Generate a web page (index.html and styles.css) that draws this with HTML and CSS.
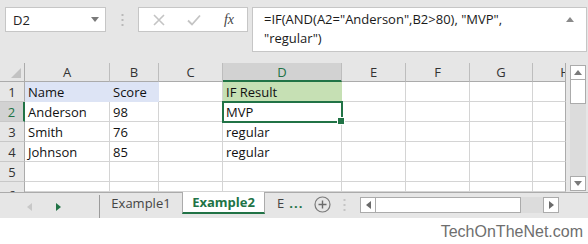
FILE: index.html
```html
<!DOCTYPE html>
<html lang="en">
<head>
    <meta charset="UTF-8">
    <title>Example2 - IF with AND</title>
    <link rel="stylesheet" href="styles.css">
</head>
<body>
    <div class="fbar">
        <div class="namebox">
            <span>D2</span>
            <svg class="caret" width="8" height="5" viewBox="0 0 8 5"><path d="M0 0h8L4 5z" fill="#7a7a7a"/></svg>
        </div>
        <svg class="grip" width="3" height="12" viewBox="0 0 3 12"><g fill="#b9b9b9"><rect x="0.5" y="0" width="2" height="2"/><rect x="0.5" y="5" width="2" height="2"/><rect x="0.5" y="10" width="2" height="2"/></g></svg>
        <div class="fbtns">
            <svg width="12" height="12" viewBox="0 0 12 12"><path d="M1 1l10 10M11 1L1 11" stroke="#c4c4c4" stroke-width="1.6"/></svg>
            <svg width="14" height="12" viewBox="0 0 14 12"><path d="M1 6.5l4 4L13 1.5" stroke="#c4c4c4" stroke-width="1.8" fill="none"/></svg>
            <span class="fx">fx</span>
        </div>
        <div class="formula">
            <span>=IF(AND(A2="Anderson",B2&gt;80), "MVP", "regular")</span>
            <svg class="up" width="8" height="5" viewBox="0 0 8 5"><path d="M0 5h8L4 0z" fill="#8a8a8a"/></svg>
        </div>
    </div>

    <div class="sheet">
        <div class="grid">
            <div class="hd corner"><svg width="10" height="10" viewBox="0 0 10 10"><path d="M10 0v10H0z" fill="#c2c2c2"/></svg></div>
            <div class="hd">A</div>
            <div class="hd">B</div>
            <div class="hd">C</div>
            <div class="hd hd-sel">D</div>
            <div class="hd">E</div>
            <div class="hd">F</div>
            <div class="hd">G</div>
            <div class="hd hd-cut"><span>H</span></div>

            <div class="rh">1</div>
            <div class="c fill-blue">Name</div>
            <div class="c fill-blue">Score</div>
            <div class="c"></div>
            <div class="c fill-green">IF Result</div>
            <div class="c"></div><div class="c"></div><div class="c"></div><div class="c"></div>

            <div class="rh rh-sel">2</div>
            <div class="c">Anderson</div>
            <div class="c">98</div>
            <div class="c"></div>
            <div class="c sel">MVP</div>
            <div class="c"></div><div class="c"></div><div class="c"></div><div class="c"></div>

            <div class="rh">3</div>
            <div class="c">Smith</div>
            <div class="c">76</div>
            <div class="c"></div>
            <div class="c">regular</div>
            <div class="c"></div><div class="c"></div><div class="c"></div><div class="c"></div>

            <div class="rh">4</div>
            <div class="c">Johnson</div>
            <div class="c">85</div>
            <div class="c"></div>
            <div class="c">regular</div>
            <div class="c"></div><div class="c"></div><div class="c"></div><div class="c"></div>

            <div class="rh">5</div>
            <div class="c"></div><div class="c"></div><div class="c"></div><div class="c"></div>
            <div class="c"></div><div class="c"></div><div class="c"></div><div class="c"></div>

            <div class="rh rh-cut">6</div>
            <div class="c"></div><div class="c"></div><div class="c"></div><div class="c"></div>
            <div class="c"></div><div class="c"></div><div class="c"></div><div class="c"></div>
        </div>

        <div class="vscroll">
            <div class="sbtn"><svg width="8" height="5" viewBox="0 0 8 5"><path d="M0 5h8L4 0z" fill="#7a7a7a"/></svg></div>
            <div class="vthumb"></div>
            <div class="vtrack"></div>
            <div class="sbtn"><svg width="8" height="5" viewBox="0 0 8 5"><path d="M0 0h8L4 5z" fill="#7a7a7a"/></svg></div>
        </div>
    </div>

    <div class="tabs">
        <div class="tabnav">
            <svg width="5" height="8" viewBox="0 0 5 8"><path d="M5 0v8L0 4z" fill="#c8c8c8"/></svg>
            <svg width="5" height="8" viewBox="0 0 5 8"><path d="M0 0v8L5 4z" fill="#217346"/></svg>
        </div>
        <div class="tab">Example1</div>
        <div class="tab tab-on">Example2</div>
        <div class="tab tab-more">E <b>...</b></div>
        <svg class="plus" width="17" height="17" viewBox="0 0 17 17"><circle cx="8.5" cy="8.5" r="7.5" fill="none" stroke="#7a7a7a" stroke-width="1.2"/><path d="M8.5 4.5v8M4.5 8.5h8" stroke="#6a6a6a" stroke-width="1.4"/></svg>
        <svg class="grip2" width="3" height="12" viewBox="0 0 3 12"><g fill="#c4c4c4"><rect x="0.5" y="0" width="2" height="2"/><rect x="0.5" y="5" width="2" height="2"/><rect x="0.5" y="10" width="2" height="2"/></g></svg>
        <div class="hscroll">
            <div class="sbtn-h"><svg width="5" height="8" viewBox="0 0 5 8"><path d="M5 0v8L0 4z" fill="#6a6a6a"/></svg></div>
            <div class="hthumb"></div>
            <div class="htrack"></div>
            <div class="sbtn-h"><svg width="5" height="8" viewBox="0 0 5 8"><path d="M0 0v8L5 4z" fill="#6a6a6a"/></svg></div>
        </div>
    </div>

    <div class="credit">TechOnTheNet.com</div>
</body>
</html>
```

FILE: styles.css
```css
* {
    box-sizing: border-box;
}
body {
    margin: 0;
    width: 588px;
    height: 244px;
    overflow: hidden;
    background: #fff;
    font-family: "Open Sans", "Noto Sans", sans-serif;
    font-size: 13px;
    color: #222;
}

/* formula bar */
.fbar {
    display: flex;
    align-items: flex-start;
    height: 58px;
    padding: 7px 1px 0 5px;
    background: #e6e6e6;
}
.namebox {
    display: flex;
    align-items: center;
    justify-content: space-between;
    width: 101px;
    height: 25px;
    padding: 0 6px 0 7px;
    background: #fff;
    border: 1px solid #c6c6c6;
    font-size: 13px;
}
.grip {
    margin: 7px 0 0 15px;
}
.fbtns {
    display: flex;
    align-items: center;
    justify-content: space-between;
    width: 110px;
    height: 25px;
    margin-left: 14px;
    padding: 0 13px 0 14px;
    background: #fff;
    border: 1px solid #c6c6c6;
}
.fx {
    font-family: "Liberation Serif", serif;
    font-style: italic;
    font-size: 14px;
    color: #444;
}
.formula {
    display: flex;
    align-items: flex-start;
    justify-content: space-between;
    flex: 1;
    height: 45px;
    margin-left: 4px;
    padding: 2px 12px 0 11px;
    background: #fff;
    border: 1px solid #c6c6c6;
    font-size: 13px;
    line-height: 19px;
    color: #1a1a1a;
}
.formula span {
    width: 280px;
}
.formula .up {
    margin-top: 7px;
}

/* sheet */
.sheet {
    display: flex;
    height: 134px;
    padding-top: 5px;
    background: #e6e6e6;
}
.grid {
    display: grid;
    grid-template-columns: 25px 85px 49px 64px 119px 64px 64px 63px 33px;
    grid-template-rows: 19px repeat(5, 20px) 10px;
    width: 566px;
    background: #fff;
    overflow: hidden;
}
.hd {
    display: flex;
    align-items: center;
    justify-content: center;
    background: #e6e6e6;
    border-right: 1px solid #bdbdbd;
    border-bottom: 1px solid #ababab;
    color: #333;
    font-size: 13px;
}
.corner {
    justify-content: flex-end;
    align-items: flex-end;
    padding: 0 3px 3px 0;
    border-right-color: #ababab;
}
.hd-sel {
    background: #d2d2d2;
    border-bottom: 2px solid #217346;
    color: #217346;
}
.hd-cut {
    justify-content: flex-start;
    overflow: hidden;
    border-right: 1px solid #ababab;
}
.hd-cut span {
    flex: none;
    width: 64px;
    text-align: center;
}
.rh {
    display: flex;
    align-items: center;
    justify-content: center;
    overflow: hidden;
    background: #e6e6e6;
    border-right: 1px solid #ababab;
    border-bottom: 1px solid #c8c8c8;
    color: #333;
    font-size: 13px;
}
.rh-sel {
    background: #d2d2d2;
    border-right: 2px solid #217346;
    color: #217346;
}
.rh-cut {
    align-items: flex-start;
    padding-top: 7px;
    line-height: 13px;
    border-bottom: none;
}
.c {
    display: flex;
    align-items: center;
    padding: 0 3px;
    border-right: 1px solid #d4d4d4;
    border-bottom: 1px solid #d4d4d4;
    white-space: nowrap;
    color: #111;
    font-size: 13px;
}
.c:nth-child(9n) {
    border-right-color: #ababab;
}
.fill-blue {
    background: #dde4f5;
    border-color: #dde4f5;
}
.fill-green {
    background: #c6e0b4;
    border-color: #c6e0b4;
}
.sel {
    position: relative;
    z-index: 1;
    outline: 2px solid #217346;
    outline-offset: -1px;
}
.sel::after {
    content: "";
    position: absolute;
    right: -4px;
    bottom: -4px;
    width: 6px;
    height: 6px;
    background: #217346;
    border: 1px solid #fff;
}

/* vertical scrollbar */
.vscroll {
    display: flex;
    flex-direction: column;
    width: 16px;
    height: 126px;
    margin: 2px 0 0 4px;
    background: #dcdcdc;
}
.sbtn {
    display: flex;
    align-items: center;
    justify-content: center;
    height: 15px;
    background: #fff;
    border: 1px solid #ababab;
}
.vthumb {
    height: 24px;
    background: #fff;
    border: 1px solid #ababab;
    border-top: none;
}
.vtrack {
    flex: 1;
}

/* sheet tabs */
.tabs {
    display: flex;
    align-items: flex-start;
    height: 26px;
    background: #e6e6e6;
    border-top: 1px solid #ababab;
}
.tabnav {
    display: flex;
    align-items: center;
    gap: 24px;
    width: 100px;
    height: 23px;
    padding-left: 27px;
    border-right: 1px solid #9b9b9b;
    margin-top: 2px;
}
.tab {
    display: flex;
    align-items: center;
    justify-content: center;
    width: 82px;
    height: 22px;
    margin-top: -1px;
    color: #444;
    font-size: 13px;
}
.tab-on {
    width: 83px;
    background: #fff;
    border-left: 1px solid #ababab;
    border-right: 1px solid #ababab;
    border-bottom: 2px solid #217346;
    color: #217346;
    font-weight: bold;
}
.tab-more {
    justify-content: flex-start;
    width: 44px;
    padding-left: 12px;
    white-space: nowrap;
}
.tab-more b {
    margin-left: 5px;
    color: #217346;
    letter-spacing: 1px;
}
.plus {
    margin: 3px 0 0 5px;
}
.grip2 {
    margin: 6px 0 0 12px;
}
.hscroll {
    display: flex;
    width: 199px;
    height: 16px;
    margin: 4px 0 0 14px;
    background: #dcdcdc;
}
.sbtn-h {
    display: flex;
    align-items: center;
    justify-content: center;
    width: 16px;
    background: #fff;
    border: 1px solid #ababab;
}
.hthumb {
    width: 145px;
    background: #fff;
    border: 1px solid #ababab;
    border-left: none;
}
.htrack {
    flex: 1;
}

.credit {
    padding: 5px 5px 0 0;
    text-align: right;
    font-family: "Liberation Sans", Arial, sans-serif;
    font-size: 16px;
    color: #6e6e6e;
}
```
